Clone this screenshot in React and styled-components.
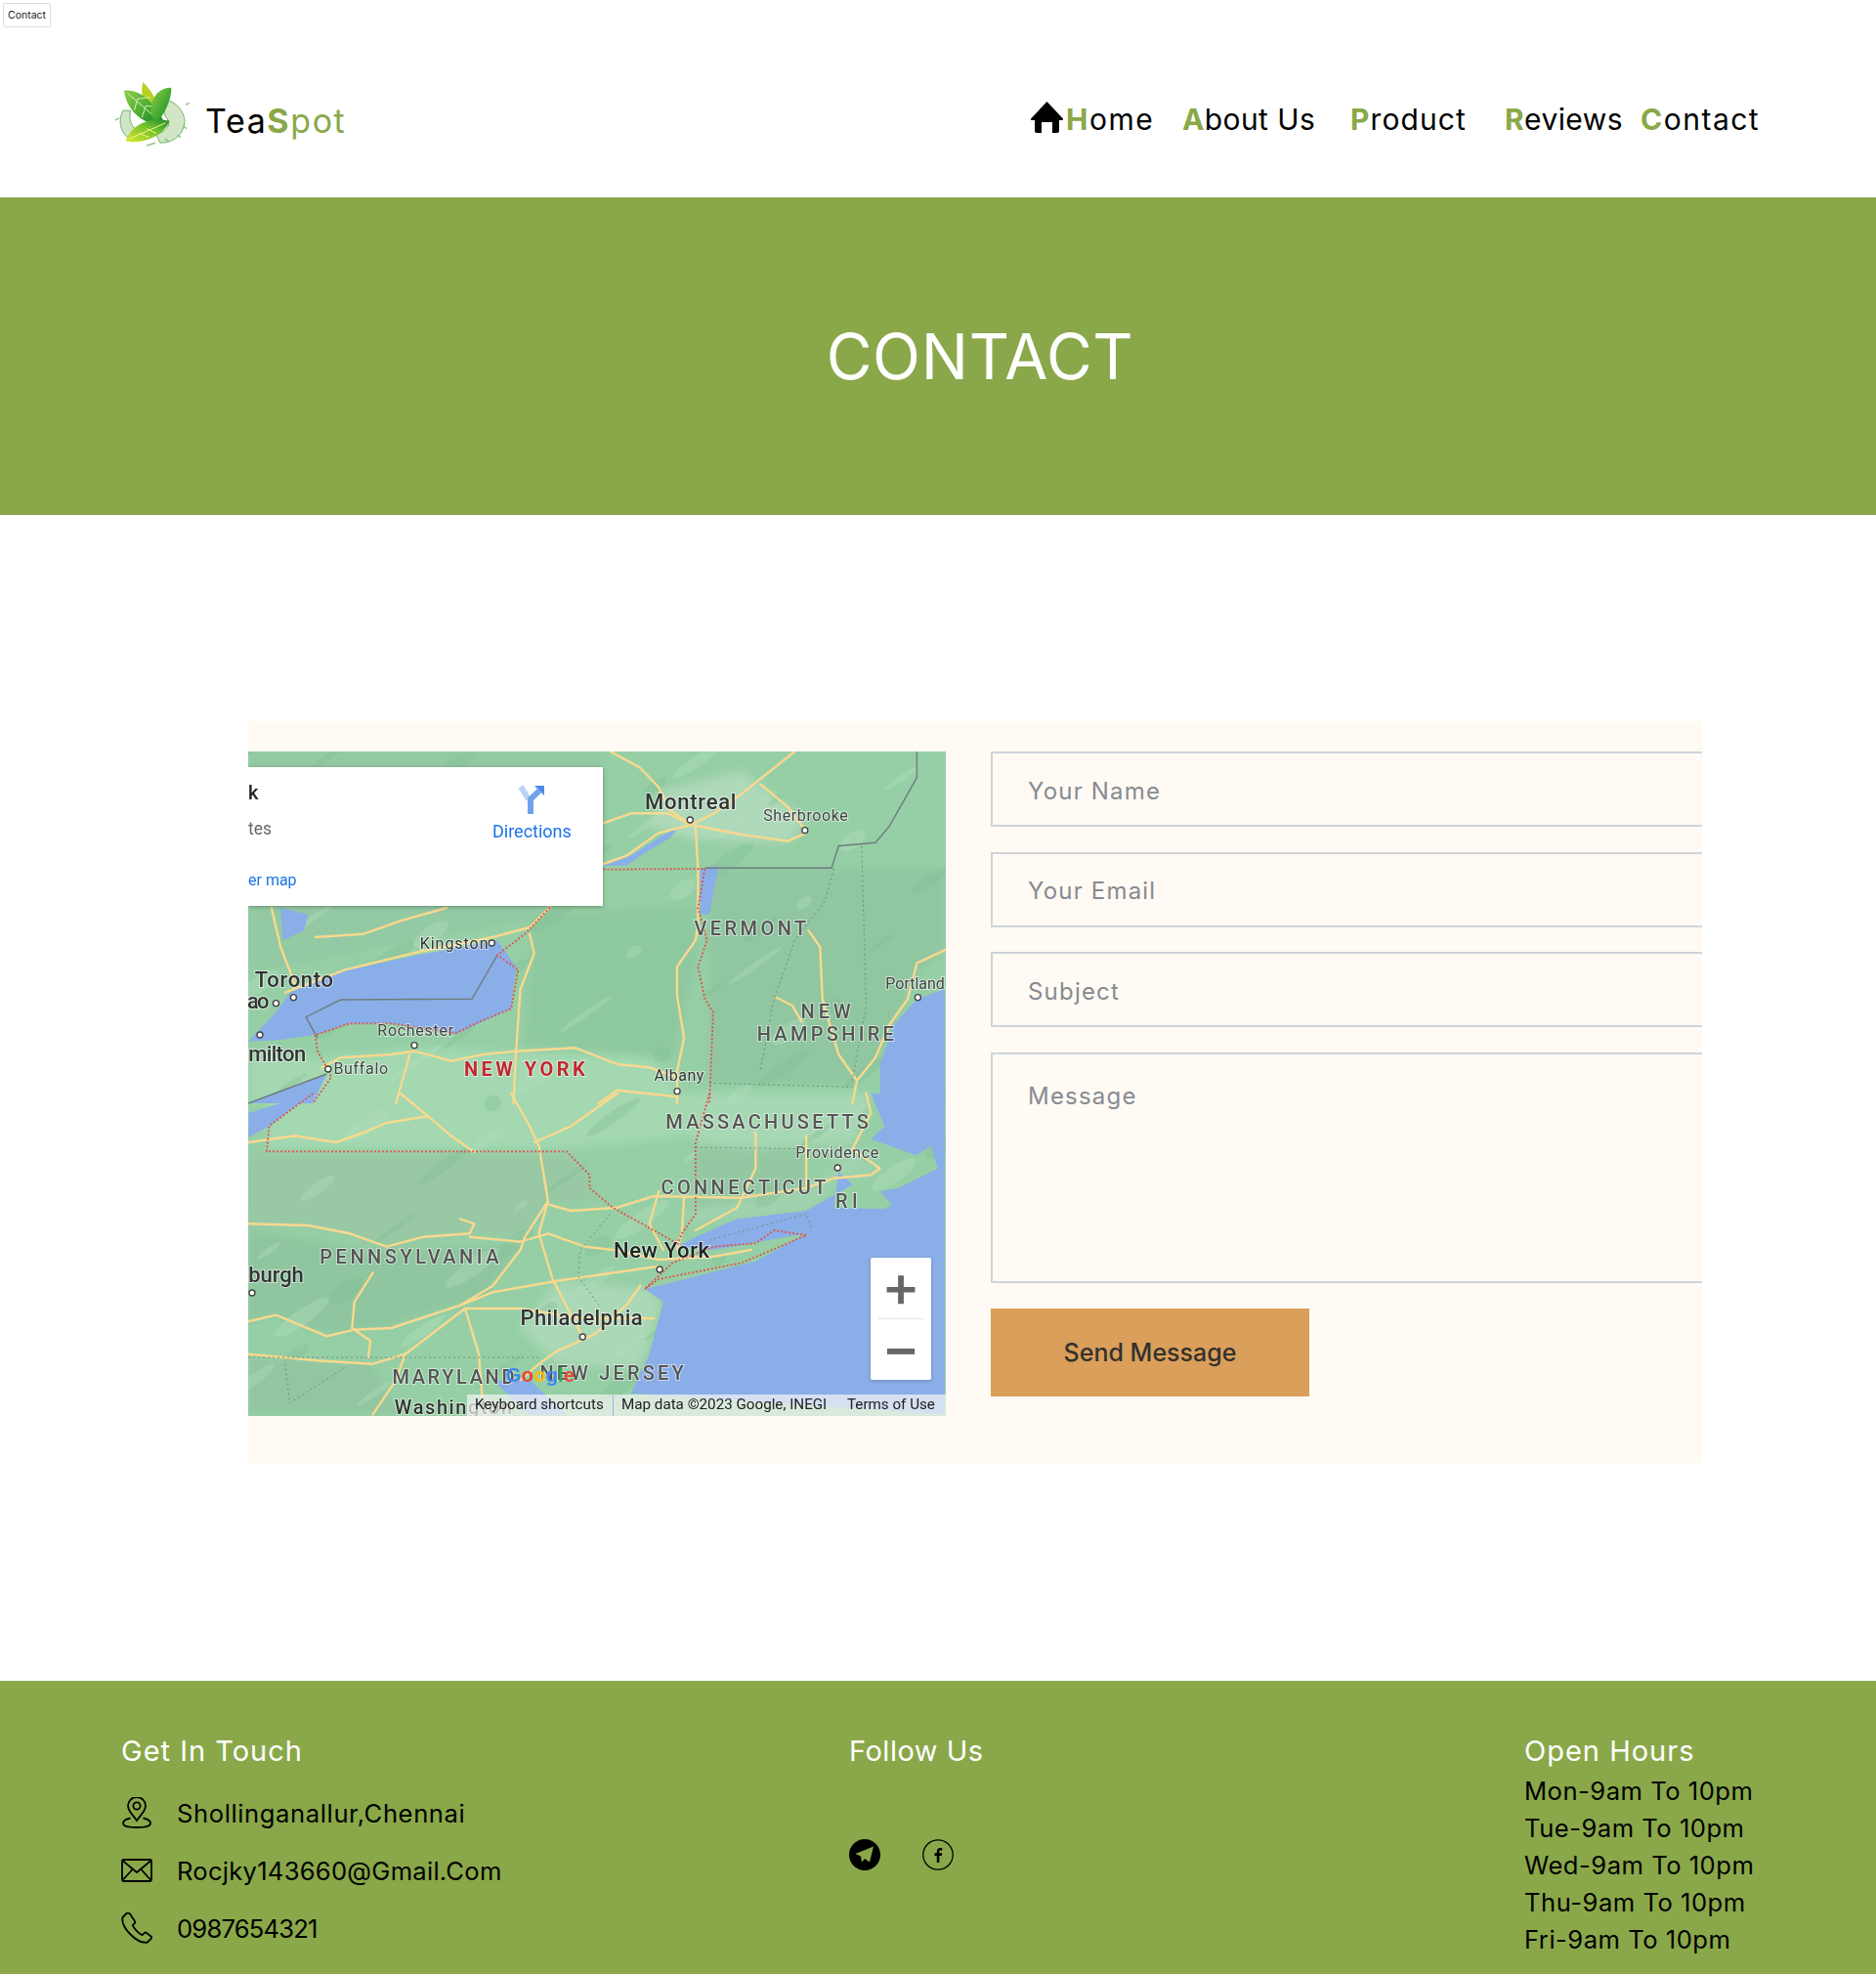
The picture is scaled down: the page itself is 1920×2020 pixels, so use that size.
import styled, { createGlobalStyle } from "styled-components";

const GREEN = "#8aa849";

const GlobalStyle = createGlobalStyle`
html, body {
  margin: 0;
  padding: 0;
  background: #fff;
  overflow-x: hidden;
  font-family: Inter, "Liberation Sans", sans-serif;
}
* { box-sizing: border-box; }
`;

// map drawing: points are read off two crops of the map, sheet "a" is the top half, "b" the bottom
const px = (x) => 240 + x / 2.119;
const py = (y, sheet) => (sheet === "a" ? 730 : 1120) + y / 3;
const pts = (list, sheet) => list.map(([x, y]) => `${px(x).toFixed(1)},${py(y, sheet).toFixed(1)}`).join(" ");

const LIGHT_AREAS = [
  ["a", "#a3d8b0", [[30, 1050], [190, 1060], [400, 1030], [620, 1040], [900, 1060], [1000, 1200], [30, 1200]]],
  ["b", "#a3d8b0", [[75, 0], [1000, 0], [1000, 130], [720, 170], [70, 170]]],
  ["a", "#8ec89f", [[650, 620], [1000, 590], [1000, 760], [950, 1060], [800, 1040], [630, 1020]]],
  ["a", "#90c6a0", [[1030, 480], [1540, 480], [1540, 720], [1470, 820], [1400, 1060], [1340, 1140], [1030, 1140]]],
  ["a", "#93c9a3", [[30, 117], [800, 117], [800, 470], [640, 640], [400, 700], [30, 800]]],
  ["a", "#aed9ba", [[930, 240], [1100, 180], [1240, 330], [1200, 400], [990, 390], [900, 350]]],
  ["a", "#a5d6b2", [[400, 720], [560, 700], [520, 790], [430, 780]]],
  ["b", "#98c8a4", [[30, 190], [720, 190], [765, 250], [780, 330], [680, 340], [620, 440], [480, 430], [330, 470], [160, 400], [30, 400]]],
  ["b", "#8fc59f", [[30, 420], [300, 480], [520, 470], [620, 470], [540, 620], [340, 710], [200, 740], [90, 680], [30, 700]]],
  ["b", "#93c8a2", [[1000, 170], [1240, 170], [1240, 290], [1000, 350]]],
  ["b", "#abd8b6", [[700, 580], [900, 600], [925, 650], [880, 840], [700, 830], [620, 720]]],
  ["b", "#92c6a1", [[30, 815], [300, 830], [360, 985], [30, 985]]],
  ["b", "#a7d8b4", [[1000, 0], [1380, 0], [1340, 150], [1130, 170], [1000, 150]]],
  ["b", "#9fd2ad", [[960, 400], [1090, 385], [1240, 360], [1300, 280], [1400, 240], [1340, 170], [1240, 290], [1000, 350]]],
];

// ridges and forest blotches, scattered by a fixed step so that every run gives the same map
const BLOTCHES = Array.from({ length: 90 }, (_, i) => ({
  cx: 254 + ((i * 137) % 714),
  cy: 770 + ((i * 251) % 680),
  rx: 9 + (i % 5) * 6,
  ry: 3 + (i % 3) * 2.5,
  fill: i % 2 ? "#b4e0bf" : "#82bd94",
}));

const WATER = [
  ["a", [[30, 1010], [60, 965], [90, 920], [120, 860], [215, 800], [400, 745], [570, 700], [610, 780], [600, 910], [530, 955], [480, 988], [340, 955], [250, 955], [175, 990], [100, 1005]]],
  ["a", [[30, 1200], [200, 1110], [170, 1200]]],
  ["b", [[30, 60], [170, 0], [75, 100], [30, 135]]],
  ["a", [[1540, 850], [1480, 880], [1430, 960], [1400, 1080], [1400, 1200], [1540, 1200]]],
  ["a", [[100, 600], [160, 620], [150, 670], [105, 700]]],
  ["a", [[1010, 480], [1050, 470], [1030, 620], [1010, 620]]],
  ["b", [[1380, 0], [1410, 100], [1380, 140], [1480, 190], [1510, 160], [1525, 230], [1440, 290], [1400, 300], [1425, 340], [1400, 370], [1540, 370], [1540, 0]]],
  ["b", [[1540, 360], [1300, 350], [1310, 240], [1340, 280], [1240, 360], [1090, 385], [1000, 440], [960, 470], [1040, 480], [1240, 430], [1130, 515], [950, 580], [890, 600], [930, 640], [900, 800], [860, 920], [1540, 985]]],
  ["a", [[920, 385], [960, 355], [945, 385], [880, 440], [850, 470], [800, 470], [860, 440]]],
  ["b", [[560, 880], [640, 880], [720, 985], [640, 985]]],
];

const ROADS = [
  ["a", [[815, 120], [880, 170], [920, 230], [945, 300], [990, 345]]],
  ["a", [[1215, 120], [1100, 250], [1040, 310], [990, 345]]],
  ["a", [[800, 340], [860, 310], [940, 310], [990, 345]]],
  ["a", [[800, 465], [850, 440], [920, 370], [990, 345], [1100, 375], [1200, 395], [1240, 370]]],
  ["a", [[1000, 350], [1005, 480], [1005, 650], [1000, 700], [960, 780], [960, 870], [975, 1000], [960, 1100], [960, 1200]]],
  ["a", [[1140, 220], [1200, 290], [1237, 360]]],
  ["a", [[640, 680], [650, 740], [620, 850], [610, 1050], [605, 1200]]],
  ["a", [[110, 860], [240, 790], [400, 735], [560, 690], [640, 660], [690, 590]]],
  ["a", [[80, 600], [100, 720], [130, 830]]],
  ["a", [[175, 690], [280, 680], [360, 640], [460, 600]]],
  ["a", [[190, 1090], [230, 1060], [340, 1050], [390, 1040], [470, 1070], [540, 1050], [610, 1040], [740, 1030], [830, 1080], [900, 1090], [960, 1120]]],
  ["a", [[1245, 670], [1270, 720], [1275, 880], [1310, 1050], [1350, 1130], [1340, 1200]]],
  ["a", [[1175, 875], [1210, 900], [1230, 950]]],
  ["a", [[1540, 730], [1480, 770], [1460, 880], [1420, 960], [1390, 1060], [1350, 1130]]],
  ["a", [[960, 1180], [830, 1160], [790, 1200]]],
  ["a", [[380, 1050], [360, 1150], [350, 1200]]],
  ["b", [[360, 0], [420, 70], [330, 90], [280, 120], [220, 150], [130, 130], [30, 150]]],
  ["b", [[420, 70], [470, 130], [520, 180]]],
  ["b", [[600, 0], [640, 100], [660, 160], [680, 330], [630, 440], [620, 480], [560, 590], [490, 650], [340, 720], [260, 725], [200, 745], [90, 680], [30, 700]]],
  ["b", [[650, 150], [730, 100], [830, 0]]],
  ["b", [[680, 340], [730, 360], [830, 350], [910, 315], [1100, 320], [1240, 290], [1300, 260], [1380, 250], [1400, 230], [1340, 170], [1380, 60], [1370, 0]]],
  ["b", [[30, 400], [160, 405], [250, 430], [330, 470], [410, 440], [510, 430], [520, 400], [490, 385]]],
  ["b", [[510, 440], [620, 455], [680, 430], [760, 470], [820, 480], [920, 510]]],
  ["b", [[680, 330], [660, 430], [690, 570], [730, 680], [755, 745]]],
  ["b", [[920, 510], [1040, 500], [1120, 480]]],
  ["b", [[920, 300], [900, 400], [930, 480]]],
  ["b", [[975, 320], [970, 430], [960, 480]]],
  ["b", [[1130, 120], [1130, 230], [1090, 350], [1000, 420]]],
  ["b", [[1240, 130], [1240, 280]]],
  ["b", [[30, 800], [180, 820], [300, 830], [370, 800], [500, 660], [620, 660], [750, 690], [910, 690]]],
  ["b", [[300, 550], [260, 640], [255, 720], [295, 760], [290, 810]]],
  ["b", [[500, 660], [530, 800], [540, 985]]],
  ["b", [[920, 530], [700, 575], [560, 610], [490, 650]]],
  ["b", [[370, 800], [350, 880], [300, 985]]],
  ["b", [[880, 590], [850, 650], [780, 740], [700, 790], [660, 830], [620, 880]]],
];

const RED_LINES = [
  ["a", [[800, 482], [1020, 480], [1005, 600], [1025, 700], [1005, 780], [1020, 880], [1038, 920], [1030, 1200]]],
  ["a", [[690, 590], [630, 680], [570, 745], [615, 790], [600, 910], [530, 950], [480, 985], [340, 955], [250, 955], [175, 990], [180, 1040], [200, 1090], [210, 1120], [170, 1200]]],
  ["b", [[170, 0], [75, 100], [70, 178], [720, 178], [770, 250], [770, 290], [820, 350], [960, 460]]],
  ["b", [[1030, 0], [1000, 150], [1000, 370], [970, 430], [960, 470]]],
  ["b", [[890, 600], [920, 570], [1100, 520], [1240, 435], [1170, 420], [1130, 460], [1040, 470], [950, 520], [890, 600]]],
];

const GREY_LINES = [
  ["a", [[1020, 478], [1295, 478], [1310, 410], [1390, 400], [1420, 350], [1480, 200], [1480, 120]]],
  ["a", [[570, 745], [515, 880], [230, 882], [155, 935], [180, 1000]]],
  ["a", [[200, 1110], [30, 1200]]],
];

const STATE_LINES = [
  ["a", [[1360, 410], [1370, 900], [1340, 1130]]],
  ["a", [[1300, 480], [1280, 580], [1215, 700], [1170, 880], [1140, 1100]]],
  ["a", [[1030, 1138], [1340, 1150]]],
  ["b", [[1000, 165], [1240, 170]]],
  ["b", [[815, 370], [750, 480], [745, 560], [790, 650]]],
  ["b", [[30, 810], [660, 810]]],
  ["b", [[110, 830], [120, 950], [240, 840]]],
  ["b", [[1030, 450], [1240, 370], [1250, 410]]],
];

const CITY_DOTS = [
  ["a", 988, 330], ["a", 1237, 362], ["a", 558, 708], ["a", 128, 875], ["a", 90, 893], ["a", 55, 990],
  ["a", 390, 1022], ["a", 203, 1095], ["a", 960, 1163], ["a", 1482, 875],
  ["b", 1308, 228], ["b", 922, 540], ["b", 755, 747], ["b", 38, 612],
];

const LABELS = [
  ["a", "Montreal", 890, 298, 198, 22, "#333", 500],
  ["a", "Sherbrooke", 1147, 332, 183, 16, "#444"],
  ["a", "VERMONT", 997, 685, 243, 20, "#555", 500],
  ["a", "Kingston", 402, 725, 148, 16, "#333"],
  ["a", "Toronto", 44, 842, 170, 22, "#333", 500],
  ["a", "gao", 5, 910, 70, 22, "#333", 500],
  ["a", "Rochester", 310, 992, 165, 16, "#444"],
  ["a", "milton", 30, 1070, 125, 22, "#333", 500],
  ["a", "Buffalo", 215, 1110, 118, 16, "#444"],
  ["a", "NEW YORK", 498, 1115, 262, 20, "#c5282f", 700],
  ["a", "Albany", 910, 1132, 108, 16, "#333"],
  ["a", "Portland", 1412, 850, 128, 16, "#444"],
  ["a", "NEW", 1228, 940, 108, 20, "#555", 500],
  ["a", "HAMPSHIRE", 1133, 1007, 297, 20, "#555", 500],
  ["b", "MASSACHUSETTS", 935, 107, 440, 20, "#555", 500],
  ["b", "Providence", 1217, 198, 180, 16, "#444"],
  ["b", "CONNECTICUT", 925, 310, 358, 20, "#555", 500],
  ["b", "RI", 1303, 352, 48, 20, "#555", 500],
  ["b", "New York", 822, 503, 208, 22, "#222", 500],
  ["b", "PENNSYLVANIA", 185, 522, 388, 20, "#555", 500],
  ["b", "burgh", 30, 578, 120, 22, "#333", 500],
  ["b", "Philadelphia", 620, 712, 265, 22, "#333", 500],
  ["b", "MARYLAND", 342, 890, 265, 20, "#555", 500],
  ["b", "NEW JERSEY", 662, 878, 312, 20, "#555", 500],
  ["b", "Washington", 347, 985, 255, 20, "#333", 500],
];

const FOOTER_HOURS = ["Mon-9am To 10pm", "Tue-9am To 10pm", "Wed-9am To 10pm", "Thu-9am To 10pm", "Fri-9am To 10pm"];
const NAV = [
  { label: "ome", first: "H", left: 0, width: 90, spacing: 1.5 },
  { label: "bout Us", first: "A", left: 29, width: 134, spacing: 0.4 },
  { label: "roduct", first: "P", left: 38, width: 117, spacing: 1.1 },
  { label: "eviews", first: "R", left: 41, width: 119, spacing: 0.4 },
  { label: "ontact", first: "C", left: 20, width: 120, spacing: 1.5 },
];

function MapDrawing() {
  return (
    <MapSvg viewBox="254 770 714 680" preserveAspectRatio="none">
      <defs>
        <filter id="softEdge" x="-5%" y="-5%" width="110%" height="110%">
          <feGaussianBlur stdDeviation="4" />
        </filter>
      </defs>
      <rect x="254" y="770" width="714" height="680" fill="#96cfa5" />
      <g filter="url(#softEdge)">
        {LIGHT_AREAS.map(([sheet, fill, list], i) => (
          <polygon key={i} points={pts(list, sheet)} fill={fill} />
        ))}
      </g>
      {BLOTCHES.map((b, i) => (
        <ellipse key={i} cx={b.cx} cy={b.cy} rx={b.rx} ry={b.ry} fill={b.fill} opacity="0.35" transform={`rotate(-35 ${b.cx} ${b.cy})`} />
      ))}
      {WATER.map(([sheet, list], i) => (
        <polygon key={i} points={pts(list, sheet)} fill="#8aaee8" />
      ))}
      {ROADS.map(([sheet, list], i) => (
        <polyline key={i} points={pts(list, sheet)} fill="none" stroke="#f8d98e" strokeWidth="2.4" strokeLinejoin="round" strokeLinecap="round" />
      ))}
      {STATE_LINES.map(([sheet, list], i) => (
        <polyline key={i} points={pts(list, sheet)} fill="none" stroke="#6f8f7c" strokeWidth="1" strokeDasharray="2 3" />
      ))}
      {GREY_LINES.map(([sheet, list], i) => (
        <polyline key={i} points={pts(list, sheet)} fill="none" stroke="#6f7d80" strokeWidth="1.4" />
      ))}
      {RED_LINES.map(([sheet, list], i) => (
        <polyline key={i} points={pts(list, sheet)} fill="none" stroke="#e2504c" strokeWidth="1.8" strokeDasharray="2 2" />
      ))}
      {CITY_DOTS.map(([sheet, x, y], i) => (
        <circle key={i} cx={px(x)} cy={py(y, sheet)} r="3" fill="#fff" stroke="#444" strokeWidth="1.4" />
      ))}
      {LABELS.map(([sheet, text, x, y, w, size, color, weight]) => (
        <MapLabel
          key={text + x}
          x={px(x)}
          y={py(y, sheet)}
          textLength={w / 2.119}
          lengthAdjust="spacing"
          fontSize={size}
          fill={color}
          fontWeight={weight || 400}
        >
          {text}
        </MapLabel>
      ))}
      <GoogleMark x={px(588)} y={py(885, "b")} textLength={150 / 2.119} lengthAdjust="spacingAndGlyphs">
        <tspan fill="#4285f4">G</tspan>
        <tspan fill="#ea4335">o</tspan>
        <tspan fill="#fbbc05">o</tspan>
        <tspan fill="#4285f4">g</tspan>
        <tspan fill="#34a853">l</tspan>
        <tspan fill="#ea4335">e</tspan>
      </GoogleMark>
    </MapSvg>
  );
}

function LeafLogo() {
  return (
    <LogoSvg viewBox="0 0 80 70">
      <defs>
        <linearGradient id="leafA" x1="0" y1="0" x2="1" y2="1">
          <stop offset="0" stopColor="#8fcf4a" />
          <stop offset="0.6" stopColor="#3fa52f" />
          <stop offset="1" stopColor="#14792a" />
        </linearGradient>
        <linearGradient id="leafB" x1="0" y1="1" x2="1" y2="0">
          <stop offset="0" stopColor="#dbe82a" />
          <stop offset="0.6" stopColor="#6fc02c" />
          <stop offset="1" stopColor="#1d8a2d" />
        </linearGradient>
      </defs>
      <path d="M9 30C3 42 7 55 17 60L23 50C17 46 15 38 17 30Z" fill="#cfe5c4" stroke="#6fae6f" strokeWidth="1" />
      <path d="M52 18C64 20 74 30 74 42C73 54 64 64 48 64L44 55C56 52 60 44 55 38C52 34 51 27 52 18Z" fill="#d2e6c6" stroke="#6fae6f" strokeWidth="1" />
      <path d="M1 40l4-2M75 24l4-2M72 46l4 3M34 67l9-3M53 60l5 3M66 56l4 2" stroke="#8fc48a" strokeWidth="1.600" fill="none" />
      <path d="M30 0C27 14 30 28 44 42C50 30 44 14 30 0Z" fill="#b6d224" />
      <path d="M10 9C26 6 44 22 54 46C38 47 14 36 10 9Z" fill="url(#leafA)" />
      <path d="M14 12L50 43M24 18L21 30M33 25L29 37M24 18L37 16M33 25L45 26" stroke="#d8f0b4" strokeWidth="1" fill="none" />
      <path d="M60 6C48 6 41 14 39 24C37 32 41 39 44 44C52 35 60 20 60 6Z" fill="url(#leafA)" />
      <path d="M12 62C18 44 38 36 58 41C52 57 30 66 12 62Z" fill="url(#leafB)" />
      <path d="M15 60L54 43M26 54L36 58M34 49L44 54" stroke="#f2f88c" strokeWidth="1" fill="none" />
    </LogoSvg>
  );
}

function App() {
  return (
    <>
      <GlobalStyle />
      <TopTag>Contact</TopTag>
      <Header>
        <Brand>
          <LeafLogo />
          <BrandName>
            Tea<BrandAccent>S</BrandAccent>
            <BrandRest>pot</BrandRest>
          </BrandName>
        </Brand>
        <Nav>
          <HomeIcon viewBox="0 0 33 32">
            <path d="M16.5 0L33 17.5a1 1 0 0 1-1 1.5h-3v11a2 2 0 0 1-2 2h-5V21h-11v11H6a2 2 0 0 1-2-2V19H1a1 1 0 0 1-1-1.5z" fill="#000" />
          </HomeIcon>
          {NAV.map((item) => (
            <NavLink key={item.first} $left={item.left} $width={item.width} $spacing={item.spacing}>
              <NavFirst>{item.first}</NavFirst>
              {item.label}
            </NavLink>
          ))}
        </Nav>
      </Header>

      <Hero>
        <HeroTitle>CONTACT</HeroTitle>
      </Hero>

      <ContactSection>
        <ContactCard>
          <MapFrame>
            <MapDrawing />
            <InfoWindow>
              <InfoName>k</InfoName>
              <InfoAddress>tes</InfoAddress>
              <InfoLink>er map</InfoLink>
              <DirectionsBox>
                <svg width="32" height="30" viewBox="0 0 32 30">
                  <path d="M5 2l8 13" stroke="#b9d4f5" strokeWidth="6" fill="none" />
                  <path d="M15 30V15L24 6" stroke="#6fa2ea" strokeWidth="6" fill="none" />
                  <path d="M19 1h10v10z" fill="#4d8ae6" />
                </svg>
                <DirectionsLabel>Directions</DirectionsLabel>
              </DirectionsBox>
            </InfoWindow>
            <ZoomBox>
              <ZoomButton>+</ZoomButton>
              <ZoomRule />
              <ZoomButton>−</ZoomButton>
            </ZoomBox>
            <AttributionBar>
              <AttributionItem $w={141} $left={8}>Keyboard shortcuts</AttributionItem>
              <AttributionItem $w={221} $divider>Map data ©2023 Google, INEGI</AttributionItem>
              <AttributionItem $w={91} $left={19}>Terms of Use</AttributionItem>
            </AttributionBar>
          </MapFrame>
          <ContactForm>
            <FieldInput placeholder="Your Name" />
            <FieldInput placeholder="Your Email" />
            <FieldInput placeholder="Subject" />
            <FieldArea placeholder="Message" />
            <SendButton type="button">Send Message</SendButton>
          </ContactForm>
        </ContactCard>
      </ContactSection>

      <Footer>
        <FooterCol>
          <FooterHeading>Get In Touch</FooterHeading>
          <ContactRows>
            <ContactRow>
              <RowIcon viewBox="0 0 32 32">
                <path d="M16 24C11 17 7 14 7 9a9 9 0 0 1 18 0c0 5-4 8-9 15z" />
                <circle cx="16" cy="9" r="3.6" />
                <path d="M9.5 21.5C5 22.5 2 24.500 2 26.700 2 29.500 8 31 16 31s14-1.500 14-4.300c0-2.200-3-4.200-7.500-5.200" />
              </RowIcon>
              <RowText $spacing={0.6}>Shollinganallur,Chennai</RowText>
            </ContactRow>
            <ContactRow>
              <RowIcon viewBox="0 0 32 24">
                <rect x="1" y="1" width="30" height="22" rx="1.500" />
                <path d="M1.500 2L16 14 30.500 2M1.500 22L12 10.500M30.500 22L20 10.500" />
              </RowIcon>
              <RowText $spacing={0.25}>Rocjky143660@Gmail.Com</RowText>
            </ContactRow>
            <ContactRow>
              <RowIcon viewBox="0 0 32 32">
                <path d="M5 1.500L1.500 5c-1 5 2 11.500 8 17.500s12.500 9 17.500 8l3.500-3.500c.8-.8.8-1.800 0-2.500l-4.500-3.500c-.8-.6-1.700-.5-2.300.1l-2 2c-3-.8-8-5.800-10-10l2-2c.7-.7.7-1.500.1-2.300L9 1.500C7.500.5 6 .500 5 1.500z" />
              </RowIcon>
              <RowText $spacing={-0.8}>0987654321</RowText>
            </ContactRow>
          </ContactRows>
        </FooterCol>
        <FooterCol>
          <FooterHeading $spacing={0.5}>Follow Us</FooterHeading>
          <SocialRow>
            <svg width="32" height="32" viewBox="0 0 32 32">
              <circle cx="16" cy="16" r="16" fill="#000" />
              <path d="M25 7.500L6.500 15l5.500 2.500 1 6 3-3.500 5 3.500z" fill={GREEN} />
            </svg>
            <svg width="32" height="32" viewBox="0 0 32 32">
              <circle cx="16" cy="16" r="15.200" fill="none" stroke="#000" strokeWidth="1.300" />
              <path d="M17.400 24v-7h2.400l.4-2.700h-2.800v-1.600c0-.8.3-1.300 1.400-1.300h1.500V9c-.4 0-1.200-.1-2.100-.1-2.100 0-3.400 1.200-3.400 3.500v1.900h-2.300V17h2.300v7z" fill="#000" />
            </svg>
          </SocialRow>
        </FooterCol>
        <FooterCol>
          <FooterHeading>Open Hours</FooterHeading>
          {FOOTER_HOURS.map((row) => (
            <HoursRow key={row}>{row}</HoursRow>
          ))}
        </FooterCol>
      </Footer>
    </>
  );
}

const TopTag = styled.div`
display: block;
width: 49px;
height: 25px;
margin: 3px 0 0 3px;
border: 1px solid #ddd;
border-radius: 2px;
font-size: 10.5px;
line-height: 23px;
text-align: center;
color: #222;
`;
const Header = styled.header`
height: 174px;
display: flex;
align-items: center;
justify-content: space-between;
padding: 14px 121px 0 117px;
`;
const Brand = styled.div`
display: flex;
align-items: center;
gap: 15px;
margin-top: -8px;
`;
const LogoSvg = styled.svg`
width: 78px;
height: 68px;
`;
const BrandName = styled.div`
font-size: 34px;
letter-spacing: 1.6px;
padding-top: 10px;
color: #000;
`;
const BrandAccent = styled.span`
color: ${GREEN};
font-weight: 700;
`;
const BrandRest = styled.span`
color: ${GREEN};
`;
const Nav = styled.nav`
display: flex;
align-items: center;
`;
const HomeIcon = styled.svg`
width: 33px;
height: 32px;
margin: -4px 3px 0 0;
`;
const NavLink = styled.a`
display: block;
width: ${(p) => p.$width}px;
margin-left: ${(p) => p.$left}px;
font-size: 30px;
line-height: 36px;
letter-spacing: ${(p) => p.$spacing}px;
color: #000;
white-space: nowrap;
`;
const NavFirst = styled.span`
color: ${GREEN};
font-weight: 700;
`;
const Hero = styled.section`
height: 325px;
background: ${GREEN};
display: flex;
align-items: center;
justify-content: center;
padding-left: 86px;
`;
const HeroTitle = styled.h1`
margin: 0;
font-size: 64px;
font-weight: 400;
letter-spacing: 0.7px;
color: #fff;
`;
const ContactSection = styled.section`
padding: 211px 178px 223px 254px;
`;
const ContactCard = styled.div`
height: 759px;
background: #fffaf3;
display: flex;
gap: 46px;
padding-top: 31px;
overflow: hidden;
`;
const MapFrame = styled.div`
position: relative;
flex: 0 0 714px;
height: 680px;
overflow: hidden;
filter: blur(0.5px);
`;
const MapSvg = styled.svg`
display: block;
width: 714px;
height: 680px;
`;
const MapLabel = styled.text`
font-family: Roboto, "Liberation Sans", sans-serif;
paint-order: stroke;
stroke: rgba(255, 255, 255, 0.55);
stroke-width: 2px;
`;
const GoogleMark = styled.text`
font-family: "Liberation Sans", sans-serif;
font-size: 20px;
font-weight: 700;
`;
const InfoWindow = styled.div`
position: absolute;
left: 0;
top: 16px;
width: 363px;
height: 142px;
background: #fff;
box-shadow: 0 1px 4px rgba(0, 0, 0, 0.3);
font-family: Roboto, "Liberation Sans", sans-serif;
`;
const InfoName = styled.div`
position: absolute;
left: 0;
top: 14px;
font-size: 20px;
font-weight: 500;
color: #222;
`;
const InfoAddress = styled.div`
position: absolute;
left: 0;
top: 53px;
font-size: 17.5px;
color: #666;
`;
const InfoLink = styled.div`
position: absolute;
left: 0;
top: 106px;
font-size: 16px;
color: #1a73e8;
`;
const DirectionsBox = styled.div`
position: absolute;
left: 250px;
top: 18px;
display: flex;
flex-direction: column;
align-items: center;
gap: 7px;
`;
const DirectionsLabel = styled.div`
font-size: 18px;
color: #1a73e8;
`;
const ZoomBox = styled.div`
position: absolute;
right: 15px;
top: 518px;
width: 62px;
height: 125px;
background: #fff;
border-radius: 2px;
box-shadow: 0 1px 4px rgba(0, 0, 0, 0.2);
display: flex;
flex-direction: column;
align-items: center;
`;
const ZoomButton = styled.div`
height: 62px;
font-size: 60px;
font-weight: 500;
line-height: 56px;
color: #666;
`;
const ZoomRule = styled.div`
width: 46px;
height: 1px;
background: #e4e4e4;
`;
const AttributionBar = styled.div`
position: absolute;
right: 0;
bottom: 0;
left: 224px;
height: 22px;
display: flex;
background: rgba(245, 245, 245, 0.7);
font-family: Roboto, "Liberation Sans", sans-serif;
font-size: 15.2px;
line-height: 21px;
color: #222;
`;
const AttributionItem = styled.div`
flex: none;
width: ${(p) => p.$w}px;
margin-left: ${(p) => p.$left || 0}px;
padding-left: ${(p) => (p.$divider ? 8 : 0)}px;
border-left: ${(p) => (p.$divider ? "1px solid #9db7e4" : "none")};
white-space: nowrap;
`;
const ContactForm = styled.form`
flex: 0 0 800px;
display: flex;
flex-direction: column;
gap: 25.5px;
align-items: flex-start;
`;
const fieldCss = `
width: 800px;
background: transparent;
border: 2px solid #ced4da;
font-family: Inter, "Liberation Sans", sans-serif;
font-size: 24px;
letter-spacing: 1.2px;
color: #495057;
outline: none;
&::placeholder { color: #868b91; opacity: 1; }
`;
const FieldInput = styled.input`
${fieldCss}
height: 77px;
padding: 3px 36px 0;
flex: none;
`;
const FieldArea = styled.textarea`
${fieldCss}
height: 236.5px;
padding: 28px 36px;
resize: none;
display: block;
flex: none;
`;
const SendButton = styled.button`
flex: none;
width: 326px;
height: 90px;
background: #da9f5b;
border: none;
font-family: Inter, "Liberation Sans", sans-serif;
font-size: 25px;
font-weight: 500;
color: #33312c;
`;
const Footer = styled.footer`
height: 300px;
background: ${GREEN};
display: grid;
grid-template-columns: 745px 691px 1fr;
padding: 50px 0 0 124px;
overflow: hidden;
`;
const FooterCol = styled.div`
display: flex;
flex-direction: column;
`;
const FooterHeading = styled.h3`
margin: 0;
font-size: 29px;
line-height: 44px;
font-weight: 400;
letter-spacing: ${(p) => p.$spacing ?? 1}px;
color: #fff;
`;
const ContactRows = styled.div`
display: flex;
flex-direction: column;
gap: 27px;
margin-top: 25px;
`;
const ContactRow = styled.div`
display: flex;
align-items: center;
gap: 25px;
height: 32px;
`;
const RowIcon = styled.svg`
width: 32px;
height: 32px;
fill: none;
stroke: #000;
stroke-width: 1.8;
flex: none;
`;
const RowText = styled.span`
font-size: 25.6px;
letter-spacing: ${(p) => p.$spacing}px;
color: #000;
white-space: nowrap;
`;
const SocialRow = styled.div`
display: flex;
gap: 43px;
margin-top: 68px;
`;
const HoursRow = styled.div`
font-size: 25.6px;
line-height: 38px;
letter-spacing: 0.5px;
color: #000;
white-space: nowrap;
`;

export default App;
